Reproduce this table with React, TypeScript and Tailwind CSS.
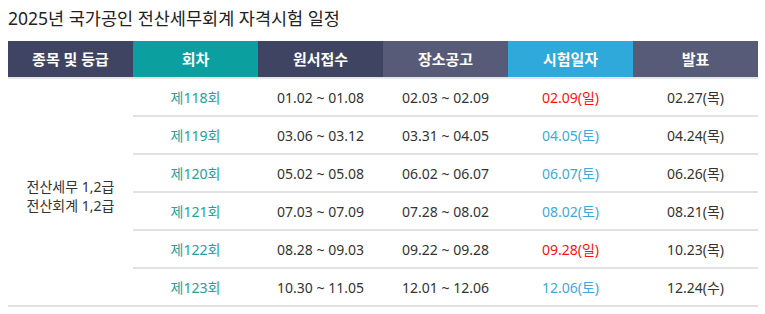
const rows = [
  { no: "제118회", apply: "01.02 ~ 01.08", notice: "02.03 ~ 02.09", exam: "02.09(일)", sun: true, result: "02.27(목)" },
  { no: "제119회", apply: "03.06 ~ 03.12", notice: "03.31 ~ 04.05", exam: "04.05(토)", sun: false, result: "04.24(목)" },
  { no: "제120회", apply: "05.02 ~ 05.08", notice: "06.02 ~ 06.07", exam: "06.07(토)", sun: false, result: "06.26(목)" },
  { no: "제121회", apply: "07.03 ~ 07.09", notice: "07.28 ~ 08.02", exam: "08.02(토)", sun: false, result: "08.21(목)" },
  { no: "제122회", apply: "08.28 ~ 09.03", notice: "09.22 ~ 09.28", exam: "09.28(일)", sun: true, result: "10.23(목)" },
  { no: "제123회", apply: "10.30 ~ 11.05", notice: "12.01 ~ 12.06", exam: "12.06(토)", sun: false, result: "12.24(수)" },
];

const headers = [
  { label: "종목 및 등급", bg: "bg-[#3f4462]" },
  { label: "회차", bg: "bg-[#0ba09f]" },
  { label: "원서접수", bg: "bg-[#3f4462]" },
  { label: "장소공고", bg: "bg-[#575b78]" },
  { label: "시험일자", bg: "bg-[#2ea9d9]" },
  { label: "발표", bg: "bg-[#575b78]" },
];

export default function App() {
  return (
    <div
      className="w-[765px] h-[314px] bg-white px-2 pt-[6px] text-[#333]"
      style={{ fontFamily: '"Noto Sans", "Noto Sans CJK KR", sans-serif' }}
    >
      <h1 className="text-[17.5px] leading-[25px] text-[#222] mb-[10px]">
        2025년 국가공인 전산세무회계 자격시험 일정
      </h1>
      <table className="w-[750px] border-collapse table-fixed text-[14px]">
        <thead>
          <tr className="h-[37px] border-b-2 border-[#e6e6e6]">
            {headers.map((h) => (
              <th key={h.label} className={`${h.bg} w-[125px] text-white font-bold text-[15px] p-0`}>
                {h.label}
              </th>
            ))}
          </tr>
        </thead>
        <tbody>
          {rows.map((r, i) => (
            <tr key={r.no} className="h-[38px]">
              {i === 0 && (
                <td rowSpan={6} className="text-center leading-[19px] border-b-2 border-[#e2e2e2] pt-[8px]">
                  전산세무 1,2급
                  <br />
                  전산회계 1,2급
                </td>
              )}
              <td className="text-center text-[#22a19d] border-b-2 border-[#e2e2e2]">{r.no}</td>
              <td className="text-center border-b-2 border-[#e2e2e2]">{r.apply}</td>
              <td className="text-center border-b-2 border-[#e2e2e2]">{r.notice}</td>
              <td
                className={`text-center border-b-2 border-[#e2e2e2] ${r.sun ? "text-[#ff1010]" : "text-[#3fa8dc]"}`}
              >
                {r.exam}
              </td>
              <td className="text-center border-b-2 border-[#e2e2e2]">{r.result}</td>
            </tr>
          ))}
        </tbody>
      </table>
    </div>
  );
}
